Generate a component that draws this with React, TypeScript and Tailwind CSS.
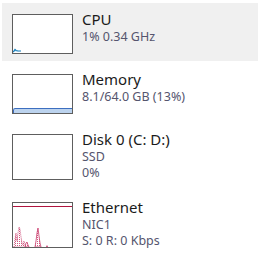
const font = { fontFamily: '"Segoe UI", "Noto Sans", "Liberation Sans", sans-serif' }

function CpuGraph() {
  return (
    <svg width="59" height="38" className="block">
      <polyline points="0,37 1,36 2,34.5 3,35.5 5,36 8,36" fill="#d6e9f6" stroke="#117dbb" strokeWidth="1.2" />
    </svg>
  )
}

function MemoryGraph() {
  return (
    <svg width="59" height="38" className="block">
      <rect x="0" y="33" width="59" height="5" fill="#bcd3ee" />
      <polyline points="0.5,38 0.5,35 1.5,33.5 59,33.5" fill="none" stroke="#3d6fc0" strokeWidth="1" />
    </svg>
  )
}

function EthernetGraph() {
  return (
    <svg width="59" height="44" className="block">
      <defs>
        <pattern id="dots" width="2" height="2" patternUnits="userSpaceOnUse">
          <rect width="1" height="1" fill="#d4587e" />
        </pattern>
      </defs>
      <line x1="0" y1="3.5" x2="59" y2="3.5" stroke="#b0153f" strokeWidth="1" />
      <polygon points="1,44 2,36 3,30 4,38 5,30 6,24 7,26 8,34 9,40 10,42 11,38 12,42 13,44" fill="url(#dots)" stroke="#c8376a" strokeWidth="0.8" strokeDasharray="1 1" />
      <polygon points="12,44 13,40 14,39 15,42 16,44" fill="url(#dots)" stroke="#c8376a" strokeWidth="0.8" />
      <polygon points="22,44 23,38 24,30 25,25 26,33 27,40 28,44" fill="url(#dots)" stroke="#c8376a" strokeWidth="0.8" />
      <polygon points="33,44 34,42 35,44" fill="#c8376a" />
    </svg>
  )
}

function Row({ title, lines, graph, tall, active }: { title: string; lines: string[]; graph?: React.ReactNode; tall?: boolean; active?: boolean }) {
  return (
    <div className={`flex items-start pl-[10px] pt-[7px] ${tall ? 'h-[66px]' : 'h-[58px]'} ${active ? 'bg-[#f0f0f0]' : ''}`}>
      <div className={`mt-[4px] w-[61px] border border-[#5e5e5e] bg-white flex items-end ${tall ? 'h-[46px]' : 'h-[40px]'}`}>
        {graph}
      </div>
      <div className="ml-[9px] flex flex-col" style={font}>
        <div className="text-[15px] leading-[19px] text-[#1b1b1b]">{title}</div>
        {lines.map((l) => (
          <div key={l} className="text-[12.5px] leading-[16px] text-[#55556e]">{l}</div>
        ))}
      </div>
    </div>
  )
}

export default function App() {
  return (
    <div className="w-[265px] h-[254px] overflow-hidden bg-white pt-[3px] pl-[2px] pr-[7px]">
      <div className="flex flex-col gap-[2px]">
        <Row title="CPU" lines={['1% 0.34 GHz']} graph={<CpuGraph />} active />
        <Row title="Memory" lines={['8.1/64.0 GB (13%)']} graph={<MemoryGraph />} />
        <Row title="Disk 0 (C: D:)" lines={['SSD', '0%']} tall />
        <Row title="Ethernet" lines={['NIC1', 'S: 0 R: 0 Kbps']} graph={<EthernetGraph />} tall />
      </div>
    </div>
  )
}
